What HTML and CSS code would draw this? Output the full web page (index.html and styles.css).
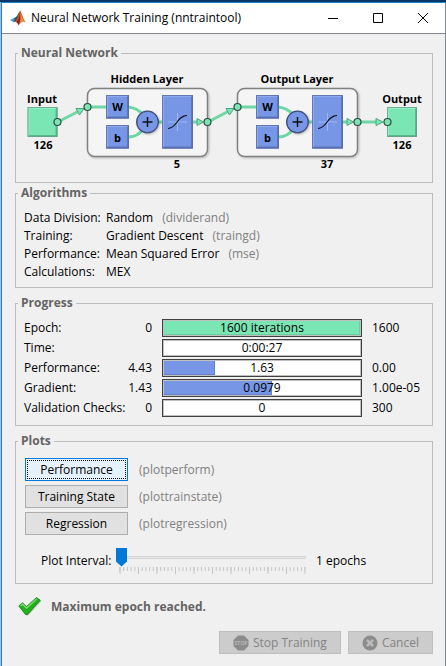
FILE: index.html
```html
<!DOCTYPE html>
<html lang="en">
<head>
<meta charset="utf-8">
<title>Neural Network Training (nntraintool)</title>
<link rel="stylesheet" href="styles.css">
</head>
<body>
<div class="window">
  <header class="titlebar">
    <svg class="logo" width="16" height="16" viewBox="0 0 16 16" aria-hidden="true">
      <path d="M0 10 5 7.5 7 10 4 12.5Z" fill="#4a9bd0"/>
      <path d="M5 7.5C7 7 8 3.500 10 1L8 8 5.500 12 4 11Z" fill="#27506e"/>
      <path d="M10 0.500C12 3 13 9 16 13 13 10.500 11.500 11 8.500 15.500 8 13 7 11.500 4.500 12 7.500 10 8.500 4 10 0.500Z" fill="#d2521f"/>
      <path d="M10 1C9.800 6 9 10 6 12 7.500 12.500 8 14 8.500 15 10 12 11 11 12 10.500 11 7 10.800 4 10 1Z" fill="#8f2316"/>
      <path d="M10 2C12 5 12 9 15 12 13 10 11 11 9 14 11 10 10.500 6 10 2Z" fill="#f08a35"/>
    </svg>
    <h1>Neural Network Training (nntraintool)</h1>
    <div class="controls">
      <button type="button" aria-label="Minimize"><svg width="10" height="10"><path d="M0 5.500H10"/></svg></button>
      <button type="button" aria-label="Maximize"><svg width="10" height="10"><path d="M.5.5H9.500V9.500H.5Z"/></svg></button>
      <button type="button" aria-label="Close"><svg width="10" height="10"><path d="M0 0 10 10M10 0 0 10"/></svg></button>
    </div>
  </header>

  <main class="content">
    <fieldset class="group">
      <legend>Neural Network</legend>
      <svg class="diagram" viewBox="16 61 416 121" role="img" aria-label="Network diagram">
        <defs>
          <filter id="shadow" x="-20%" y="-20%" width="150%" height="150%"><feDropShadow dx="1" dy="1" stdDeviation="1" flood-color="#000" flood-opacity=".25"/></filter>
          <g id="node"><circle r="3.500" fill="#7ae6b4" stroke="#2f4a3e" stroke-width="1.200"/></g>
          <g id="small">
            <path d="M0 0H23V23.500H0Z" fill="#7896e6"/>
            <path d="M0 0H23L21 2H2V21.500L0 23.500Z" fill="#8ea9f0"/>
            <path d="M23 0V23.500H0L2 21.500H21V2Z" fill="#5c76bd"/>
            <path d="M.5.5H22.500V23H.5Z" fill="none" stroke="#5b6b99" stroke-width=".8"/>
          </g>
          <g id="layer">
            <rect x="87.500" y="88.500" width="120" height="68" rx="7" fill="#f5f5f5" stroke="#808080" stroke-width="1.500" filter="url(#shadow)"/>
            <g class="wire">
              <path d="M90 107H107M128 107Q138 108 143 115M128 137Q138 137 143 129M157 122H163M192 122H198"/>
            </g>
            <use href="#small" x="106" y="95"/>
            <use href="#small" x="106" y="125"/>
            <circle cx="147.500" cy="122" r="10.800" fill="#7896e6" stroke="#3f4c78" stroke-width="1.300" filter="url(#shadow)"/>
            <path d="M142.500 122H152.500M147.500 117V127" stroke="#111" stroke-width="1.500"/>
            <path d="M162 95H193V148.500H162Z" fill="#7896e6"/>
            <path d="M162 95H193L191 97H164V146.500L162 148.500Z" fill="#8ea9f0"/>
            <path d="M193 95V148.500H162L164 146.500H191V97Z" fill="#5c76bd"/>
            <path d="M162.500 95.500H192.500V148H162.500Z" fill="none" stroke="#5b6b99" stroke-width=".8"/>
            <path d="M168 122H187M177.500 113V131" stroke="#9eb6f5"/>
            <path d="M168 128.500C177 128.500 177 115.500 187 115.500" fill="none" stroke="#111" stroke-width="1.200"/>
            <path class="arrow" d="M197 118.500 203.500 122 197 125.500Z"/>
            <text x="117.500" y="111">W</text>
            <text x="117.500" y="142">b</text>
          </g>
          <g id="port">
            <path d="M0 0H30V30H0Z" fill="#7ae6b4"/>
            <path d="M0 0H30L28 2H2V28L0 30Z" fill="#8ff0c4"/>
            <path d="M30 0V30H0L2 28H28V2Z" fill="#58b98c"/>
            <path d="M.5.5H29.500V29.500H.5Z" fill="none" stroke="#6b9c85" stroke-width=".8"/>
          </g>
        </defs>
        <use href="#port" x="27.500" y="107"/>
        <use href="#port" x="387" y="107"/>
        <use href="#layer"/>
        <use href="#layer" x="150"/>
        <g class="wire"><path d="M58 122 79 111M208 122 229 111M359 122H377"/></g>
        <path class="arrow" d="M76 108.500 84 108.500 79.500 115Z"/>
        <path class="arrow" d="M226 108.500 234 108.500 229.500 115Z"/>
        <path class="arrow" d="M376 118.500 383 122 376 125.500Z"/>
        <use href="#node" x="57.500" y="122"/>
        <use href="#node" x="87.500" y="107"/>
        <use href="#node" x="207.500" y="122"/>
        <use href="#node" x="237.500" y="107"/>
        <use href="#node" x="357.500" y="122"/>
        <use href="#node" x="387.500" y="122"/>
        <text x="42" y="103">Input</text>
        <text x="43" y="149">126</text>
        <text x="147" y="83">Hidden Layer</text>
        <text x="177" y="168">5</text>
        <text x="297" y="83">Output Layer</text>
        <text x="327" y="168">37</text>
        <text x="402" y="103">Output</text>
        <text x="402" y="149">126</text>
      </svg>
    </fieldset>

    <fieldset class="group algorithms">
      <legend>Algorithms</legend>
      <dl>
        <dt>Data Division:</dt><dd>Random <span class="hint">(dividerand)</span></dd>
        <dt>Training:</dt><dd>Gradient Descent <span class="hint">(traingd)</span></dd>
        <dt>Performance:</dt><dd>Mean Squared Error <span class="hint">(mse)</span></dd>
        <dt>Calculations:</dt><dd>MEX</dd>
      </dl>
    </fieldset>

    <fieldset class="group progress">
      <legend>Progress</legend>
      <table>
        <colgroup><col class="c-name"><col class="c-start"><col><col class="c-end"></colgroup>
        <tbody>
          <tr><th scope="row">Epoch:</th><td class="start">0</td><td class="track"><div class="bar"><div class="fill green" style="width:100%"></div><span>1600 iterations</span></div></td><td class="end">1600</td></tr>
          <tr><th scope="row">Time:</th><td class="start"></td><td class="track"><div class="bar"><span>0:00:27</span></div></td><td class="end"></td></tr>
          <tr><th scope="row">Performance:</th><td class="start">4.43</td><td class="track"><div class="bar"><div class="fill blue" style="width:26%"></div><span>1.63</span></div></td><td class="end">0.00</td></tr>
          <tr><th scope="row">Gradient:</th><td class="start">1.43</td><td class="track"><div class="bar"><div class="fill blue" style="width:55%"></div><span>0.0979</span></div></td><td class="end">1.00e-05</td></tr>
          <tr><th scope="row">Validation Checks:</th><td class="start">0</td><td class="track"><div class="bar"><span>0</span></div></td><td class="end">300</td></tr>
        </tbody>
      </table>
    </fieldset>

    <fieldset class="group plots">
      <legend>Plots</legend>
      <div class="plot-list">
        <button type="button" class="button focused">Performance</button><span class="hint">(plotperform)</span>
        <button type="button" class="button">Training State</button><span class="hint">(plottrainstate)</span>
        <button type="button" class="button">Regression</button><span class="hint">(plotregression)</span>
      </div>
      <div class="interval">
        <label for="interval">Plot Interval:</label>
        <div class="slider">
          <input id="interval" type="range" min="1" max="100" value="1">
          <svg class="ticks" viewBox="0 0 188 7" preserveAspectRatio="none" aria-hidden="true">
            <path d="M.5 2H187" stroke-width="4" stroke-dasharray="1 2.720"/>
            <path d="M.5 3.500H188" stroke-width="7" stroke-dasharray="1 17.600"/>
          </svg>
        </div>
        <output for="interval">1 epochs</output>
      </div>
    </fieldset>

    <p class="status">
      <svg width="24" height="20" viewBox="0 0 24 20" aria-hidden="true">
        <path d="M2 10.500 5.500 7.500 9 11 19 2 23.500 4 10 18.500 8.500 18.500Z" fill="#888" opacity=".5"/>
        <path d="M.8 9 4.500 5.800 8.500 9.500 18.500.6 22.300 3.200 9.500 17.500 7.500 17.500Z" fill="#22b11c" stroke="#13800f" stroke-width=".8"/>
        <path d="M2.500 9 4.500 7.200 8.600 11 18.500 2" fill="none" stroke="#7be070" stroke-width="1.400"/>
      </svg>
      <span>Maximum epoch reached.</span>
    </p>

    <footer class="actions">
      <button type="button" class="button" disabled>
        <svg width="16" height="16" viewBox="0 0 16 16" aria-hidden="true"><path d="M5 .5H11L15.500 5V11L11 15.500H5L.5 11V5Z" fill="#8c8c8c"/><text x="8" y="10" class="stop">STOP</text></svg>
        Stop Training
      </button>
      <button type="button" class="button" disabled>
        <svg width="16" height="16" viewBox="0 0 16 16" aria-hidden="true"><circle cx="8" cy="8" r="7.500" fill="#8c8c8c"/><path d="M5 5 11 11M11 5 5 11" stroke="#bbb" stroke-width="2.500"/></svg>
        Cancel
      </button>
    </footer>
  </main>
</div>
</body>
</html>
```
FILE: styles.css
```css
* { box-sizing: border-box; }
html { height: 100%; }
body {
  margin: 0;
  min-height: 100%;
  display: flex;
  padding: 2px 0 0 1px;
  background: linear-gradient(#0a3765 2px, #b4bcc2 2px);
  font: 12px/18px "Open Sans", "Noto Sans", sans-serif;
  color: #000;
}
button, input { font: inherit; color: inherit; }
.window {
  flex: 1;
  min-width: 0;
  background: #f0f0f0;
  border: 1px solid #1883d7;
  border-right-color: #828790;
  border-bottom: 0;
}
.titlebar {
  height: 31px;
  display: flex;
  align-items: center;
  padding-left: 8px;
  background: #fff;
  border-bottom: 1px solid #828790;
}
.titlebar h1 {
  flex: 1;
  margin: 0 0 0 5px;
  font-size: 12px;
  font-weight: 400;
  white-space: nowrap;
}
.controls { display: flex; }
.controls button {
  width: 45px;
  height: 30px;
  padding: 0;
  border: 0;
  background: none;
}
.controls svg { display: block; margin: 0 auto; }
.controls path { fill: none; stroke: #000; }
.content { padding: 11px 12px 10px 13px; }
.group {
  margin: 0 0 7px;
  min-width: 0;
  padding: 0;
  border: 1px solid #bcbcbc;
}
.group legend {
  margin-left: 2px;
  padding: 0 3px;
  font-weight: 700;
  line-height: 16px;
  color: #646464;
}
.group:first-child { margin-bottom: 2px; }
.hint { color: #808080; }

.diagram { display: block; width: 100%; max-width: 640px; margin: 0 auto; }
.diagram text {
  font-size: 11px;
  font-weight: 700;
  text-anchor: middle;
}
.wire path { fill: none; stroke: #6fd6a5; stroke-width: 3px; }
.arrow { fill: #7ae6b4; stroke: #4fa57e; }

.algorithms dl {
  display: grid;
  grid-template-columns: 82px 1fr;
  margin: 0;
  padding: 8px 8px 6px;
}
.algorithms dd { margin: 0; }
.algorithms .hint { margin-left: 6px; }

.progress table {
  width: 100%;
  margin: 7px 0;
  border-collapse: collapse;
  table-layout: fixed;
}
.c-name { width: 106px; }
.c-start { width: 30px; }
.c-end { width: 70px; }
.progress th, .progress td {
  height: 20px;
  padding: 0;
  font-weight: 400;
  text-align: left;
  white-space: nowrap;
}
.progress th { padding-left: 8px; }
.progress td.start { text-align: right; }
.progress td.track { padding-left: 10px; }
.progress td.end { padding-left: 10px; }
.bar {
  display: grid;
  height: 18px;
  border: 1px solid #404040;
  background: #fff;
  box-shadow: inset 1px 1px #c0c0c0, inset -1px -1px #c0c0c0;
  padding: 1px;
}
.bar > * { grid-area: 1 / 1; }
.bar span { text-align: center; line-height: 14px; }
.fill.green { background: #7ae6b4; box-shadow: inset -1px -1px #69cf9f; }
.fill.blue { background: #7896e6; box-shadow: inset -1px -1px #6681c8; }

.button {
  display: flex;
  align-items: center;
  justify-content: center;
  gap: 4px;
  height: 23px;
  padding: 0 13px;
  border: 1px solid #adadad;
  background: #e1e1e1;
  white-space: nowrap;
}
.plot-list .button { padding: 0; }
.button.focused {
  border-color: #0078d7;
  background: #e5f1fb;
  outline: 1px dotted #000;
  outline-offset: -3px;
}
.button:disabled {
  border-color: #bfbfbf;
  background: #ccc;
  color: #838383;
}
.plot-list {
  display: grid;
  grid-template-columns: 103px 1fr;
  align-items: center;
  gap: 4px 11px;
  padding: 9px 9px 0;
}
.interval {
  display: grid;
  grid-template-columns: 66px 1fr 126px;
  align-items: center;
  padding: 12px 0 9px 25px;
}
.interval label { white-space: nowrap; }
.interval output { padding-left: 10px; }
.slider { padding-left: 9px; }
.slider input {
  display: block;
  appearance: none;
  width: 100%;
  height: 20px;
  margin: 0;
  background: linear-gradient(#e7e7e7, #e7e7e7) 5px 10px / 100% 1px no-repeat, linear-gradient(#d6d6d6, #d6d6d6) 4px 9px / 100% 3px no-repeat;
}
.slider input::-webkit-slider-thumb {
  appearance: none;
  width: 11px;
  height: 19px;
  background: #0078d7;
  clip-path: polygon(0 0, 100% 0, 100% 74%, 50% 100%, 0 74%);
}
.ticks { display: block; width: 100%; height: 7px; padding-left: 3px; }
.ticks path { stroke: #c4c4c4; }

.status {
  display: flex;
  align-items: center;
  gap: 9px;
  margin: 13px 0 14px 3px;
  height: 20px;
  font-weight: 700;
  color: #646464;
}
.actions { display: flex; justify-content: flex-end; gap: 7px; }
.stop {
  font-size: 5px;
  font-weight: 700;
  fill: #b8b8b8;
  text-anchor: middle;
}
```
